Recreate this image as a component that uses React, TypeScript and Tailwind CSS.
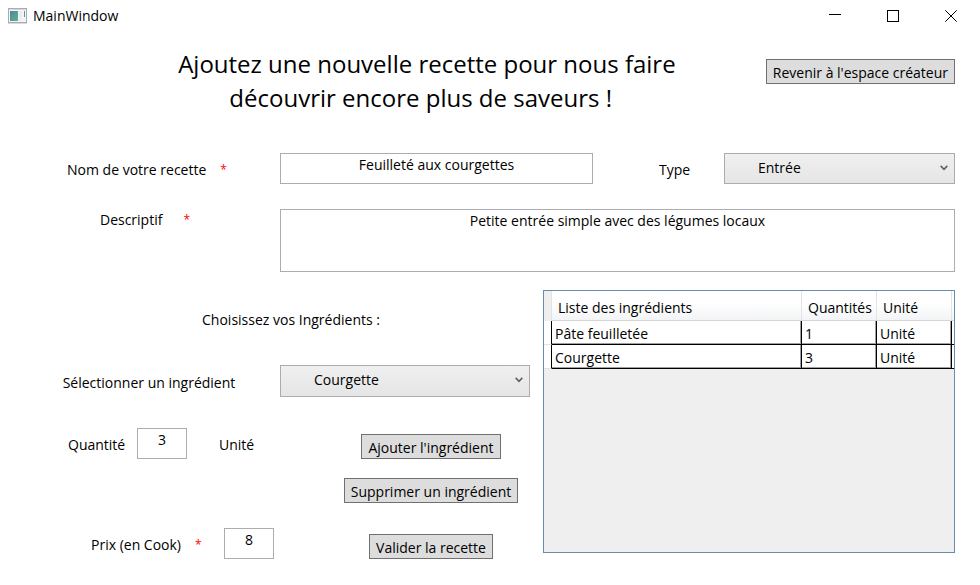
import type { ReactNode } from "react";

const ingredients = [
  { name: "Pâte feuilletée", quantity: 1, unit: "Unité" },
  { name: "Courgette", quantity: 3, unit: "Unité" },
];

const boxClass =
  "block h-[31px] rounded-none border border-[#abadb3] bg-white px-1 pb-2 text-center outline-none focus:border-[#569de5]";

function Required() {
  return <span className="text-[12px] text-[#ff0000]">*</span>;
}

function Button({ children }: { children: ReactNode }) {
  return (
    <button
      type="button"
      className="h-[25px] shrink-0 whitespace-nowrap border border-[#707070] bg-[#dddddd] px-[6px] pt-0.5 leading-5 hover:bg-[#bee6fd]"
    >
      {children}
    </button>
  );
}

function Dropdown({ id, options, className }: { id: string; options: string[]; className: string }) {
  return (
    <div className={`relative shrink-0 ${className}`}>
      <select
        id={id}
        className="block h-full w-full appearance-none rounded-none border border-[#acacac] bg-linear-to-b from-[#f0f0f0] to-[#e5e5e5] pb-0.5 pl-[33px] pr-6 outline-none"
      >
        {options.map((option) => (
          <option key={option}>{option}</option>
        ))}
      </select>
      <svg
        className="pointer-events-none absolute right-[7px] top-3 h-[6px] w-[8px]"
        viewBox="0 0 8 6"
        fill="none"
        stroke="#606060"
        strokeWidth="1.6"
        aria-hidden="true"
      >
        <path d="M0.7 0.9 4 4.4 7.3 0.9" />
      </svg>
    </div>
  );
}

function TitleBar() {
  return (
    <header className="flex h-8 items-center justify-between pl-2 pr-[23px]">
      <div className="flex items-center gap-1.5">
        <svg width="19" height="16" viewBox="0 0 19 16" aria-hidden="true">
          <defs>
            <linearGradient id="pane" x1="0" y1="0" x2="1" y2="1">
              <stop offset="0" stopColor="#4c86a4" />
              <stop offset="1" stopColor="#63b184" />
            </linearGradient>
          </defs>
          <rect x="0.5" y="0.5" width="18" height="14" fill="#f3f4f6" stroke="#a9abb2" />
          <path d="M1 1.5H18" stroke="#d4d6dc" />
          <rect x="2" y="3" width="8" height="10" fill="url(#pane)" />
          <rect x="11" y="3" width="3" height="10" fill="#e9edf4" />
          <rect x="16" y="3" width="1" height="6" fill="#5b9a9a" />
          <path d="M0 15.5H19" stroke="#d9dade" />
        </svg>
        <span>MainWindow</span>
      </div>
      <div className="flex items-center gap-[46px]">
        <button type="button" aria-label="Réduire">
          <svg width="12" height="12" viewBox="0 0 12 12" stroke="#000" shapeRendering="crispEdges">
            <path d="M0 4.5H12" />
          </svg>
        </button>
        <button type="button" aria-label="Agrandir">
          <svg width="12" height="12" viewBox="0 0 12 12" stroke="#000" fill="none" shapeRendering="crispEdges">
            <rect x="0.5" y="0.5" width="11" height="11" />
          </svg>
        </button>
        <button type="button" aria-label="Fermer">
          <svg width="12" height="12" viewBox="0 0 12 12" stroke="#000">
            <path d="M0.3 0.3 11.7 11.7M11.7 0.3 0.3 11.7" />
          </svg>
        </button>
      </div>
    </header>
  );
}

function IngredientTable() {
  const head =
    "border-r border-b border-r-[#e2e3e6] border-b-[#d5d5d5] bg-linear-to-b from-white from-40% to-[#f3f4f6] p-0 pl-[6px] pt-1 text-left font-normal whitespace-nowrap overflow-hidden";
  const cell =
    "border-r border-b border-black bg-white p-0 pl-[3px] pt-0.5 shadow-[inset_-1px_-1px_0_#a0a0a0]";
  return (
    <div className="mb-[14px] min-w-0 flex-1 border border-[#688caf] bg-[#efefef]">
      <table className="w-full table-fixed border-separate border-spacing-0">
        <colgroup>
          <col className="w-2" />
          <col />
          <col className="w-[75px]" />
          <col className="w-[75px]" />
          <col className="w-[2px]" />
        </colgroup>
        <thead>
          <tr className="h-[30px]">
            <td className="border-b border-r border-b-[#efefef] border-r-[#e2e3e6] p-0" />
            <th scope="col" className={head}>Liste des ingrédients</th>
            <th scope="col" className={head}>Quantités</th>
            <th scope="col" className={head}>Unité</th>
            <td className="border-b border-[#d5d5d5] bg-linear-to-b from-white from-40% to-[#f3f4f6] p-0" />
          </tr>
        </thead>
        <tbody>
          {ingredients.map((item) => (
            <tr key={item.name} className="h-6">
              <td className="border-r border-b border-r-black border-b-[#e2e3e6] bg-white p-0" />
              <td className={cell}>{item.name}</td>
              <td className={cell}>{item.quantity}</td>
              <td className={cell}>{item.unit}</td>
              <td className="border-b border-black bg-white p-0" />
            </tr>
          ))}
        </tbody>
      </table>
    </div>
  );
}

export default function App() {
  return (
    <div className="min-h-screen bg-white font-['Open_Sans','Noto_Sans',sans-serif] text-[14px] leading-5 text-black">
      <TitleBar />
      <form className="pb-4 pl-[14px] pr-[25px]">
        <div className="flex items-start pt-[15px]">
          <h1 className="flex-1 pl-[74px] text-center text-[24px] leading-[34px]">
            Ajoutez une nouvelle recette pour nous faire
            <br />
            découvrir encore plus de saveurs !&nbsp;&nbsp;
          </h1>
          <div className="pt-3">
            <Button>Revenir à l'espace créateur</Button>
          </div>
        </div>

        <div className="flex items-center pt-[38px]">
          <label htmlFor="nom" className="flex w-[266px] shrink-0 justify-center gap-[14px] pt-0.5">
            Nom de votre recette <Required />
          </label>
          <input id="nom" className={`${boxClass} min-w-0 flex-1`} defaultValue="Feuilleté aux courgettes" />
          <label htmlFor="type" className="w-[131px] shrink-0 pl-8 pt-0.5 text-center">
            Type
          </label>
          <Dropdown id="type" className="h-[31px] w-[231px]" options={["Entrée", "Plat", "Dessert"]} />
        </div>

        <div className="flex items-start pt-[25px]">
          <label htmlFor="descriptif" className="flex w-[266px] shrink-0 justify-center gap-[21px] pr-1 pt-px">
            Descriptif <Required />
          </label>
          <textarea
            id="descriptif"
            className="block h-[63px] min-w-0 flex-1 resize-none border border-[#abadb3] px-1 py-px text-center outline-none"
            defaultValue="Petite entrée simple avec des légumes locaux"
          />
        </div>

        <div className="flex gap-[13px] pt-[18px]">
          <div className="w-[516px] shrink-0 pb-2 pt-5">
            <h2 className="pl-[38px] text-center">Choisissez vos Ingrédients :</h2>

            <div className="flex items-center pt-[35px]">
              <label htmlFor="ingredient" className="w-[266px] pl-1 pt-1 text-center">
                Sélectionner un ingrédient
              </label>
              <Dropdown id="ingredient" className="h-8 w-[250px]" options={["Courgette", "Pâte feuilletée"]} />
            </div>

            <div className="flex items-end pt-[31px]">
              <div className="flex w-[318px] items-center pl-[54px]">
                <label htmlFor="quantite" className="w-[69px] pt-0.5">Quantité</label>
                <input id="quantite" className={`${boxClass} w-[50px]`} defaultValue="3" />
                <span className="pl-8 pt-0.5">Unité</span>
              </div>
              <div className="flex flex-1 justify-center">
                <Button>Ajouter l'ingrédient</Button>
              </div>
            </div>

            <div className="flex justify-center pl-[318px] pt-[19px]">
              <Button>Supprimer un ingrédient</Button>
            </div>

            <div className="flex items-end pt-[25px]">
              <div className="flex w-[318px] items-center pl-[77px]">
                <label htmlFor="prix" className="flex w-[133px] gap-[14px] pt-0.5">
                  Prix (en Cook) <Required />
                </label>
                <input id="prix" className={`${boxClass} w-[50px]`} defaultValue="8" />
              </div>
              <div className="flex flex-1 justify-center">
                <Button>Valider la recette</Button>
              </div>
            </div>
          </div>
          <IngredientTable />
        </div>
      </form>
    </div>
  );
}
